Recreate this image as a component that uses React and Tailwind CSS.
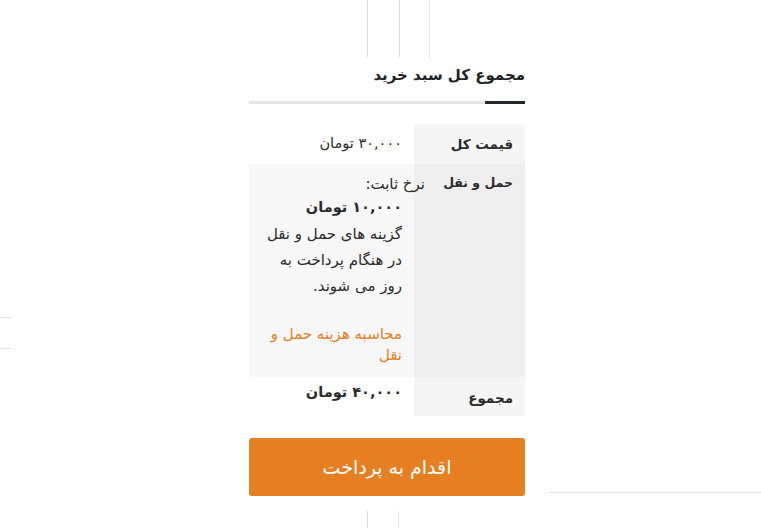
import React from "react";

const fa = { fontFamily: '"DejaVu Sans", "Noto Sans", sans-serif' };

// hairline column edges of the surrounding page layout
const Columns = ({ className, widths }) => (
  <div className={`flex pl-[367px] ${className}`}>
    {widths.map((w, i) => (
      <div
        key={i}
        className={`h-full border-l border-[#e3e3e3] ${
          i === widths.length - 1 ? "border-r" : ""
        } ${w}`}
      />
    ))}
  </div>
);

const Hairline = ({ className }) => (
  <div className={`absolute h-px bg-[#e3e3e3] ${className}`} />
);

const CartTotals = () => {
  return (
    <div dir="rtl" className="w-[276px] text-[#2b2b2b]" style={fa}>
      <h2 className="h-[30px] text-[15px] leading-[30px] font-bold text-[#1e2326] text-right">
        مجموع کل سبد خرید
      </h2>
      <div className="mt-[11px] flex h-[3px] bg-[#e5e5e5]">
        <div className="w-[40px] h-[3px] bg-[#23282d]" />
      </div>

      <table className="mt-[20px] w-full border-collapse text-[15px]">
        <tbody>
          <tr className="h-[40px]">
            <th className="w-[111px] bg-[#f5f5f5] pr-[12px] text-right align-middle font-bold text-[13.5px]">
              قیمت کل
            </th>
            <td className="bg-white pr-[12px] align-middle text-[14.5px]">
              ۳۰,۰۰۰ تومان
            </td>
          </tr>
          <tr className="h-[213px]">
            <th className="bg-[#eeeeee] pr-[12px] pt-[10px] text-right align-top font-bold text-[12.5px]">
              حمل و نقل
            </th>
            <td className="bg-[#f7f7f7] pr-[12px] pt-[9px] align-top">
              <div className="-mr-[23px] leading-[22px]">نرخ ثابت:</div>
              <div className="font-bold text-[14.5px] leading-[24px]">۱۰,۰۰۰ تومان</div>
              <p className="mt-[2px] leading-[26px]">
                گزینه های حمل و نقل
                <br />
                در هنگام پرداخت به
                <br />
                روز می شوند.
              </p>
              <a className="block mt-[25px] leading-[21px] text-[#e67e22]">
                محاسبه هزینه حمل و
                <br />
                نقل
              </a>
            </td>
          </tr>
          <tr className="h-[39px]">
            <th className="bg-[#f5f5f5] pr-[12px] pt-[4px] text-right align-middle font-bold text-[13.5px]">
              مجموع
            </th>
            <td className="bg-white pr-[12px] pt-[5px] align-top font-bold text-[14.5px]">
              ۴۰,۰۰۰ تومان
            </td>
          </tr>
        </tbody>
      </table>

      <button className="mt-[22px] w-full h-[58px] rounded-[3px] bg-[#e67e22] text-white text-[19px]">
        اقدام به پرداخت
      </button>
    </div>
  );
};

export default function App() {
  return (
    <div className="relative flex flex-col w-[761px] h-[528px] bg-white overflow-hidden">
      <Columns className="h-[58px]" widths={["w-[32px]", "w-[31px]"]} />

      <div className="pt-[2px] pl-[249px]">
        <CartTotals />
      </div>

      <Columns className="mt-[15px] h-[17px]" widths={["w-[32px]"]} />

      <Hairline className="left-0 top-[317px] w-[11px]" />
      <Hairline className="left-0 top-[348px] w-[11px]" />
      <Hairline className="left-[549px] top-[492px] w-[212px]" />
    </div>
  );
}
